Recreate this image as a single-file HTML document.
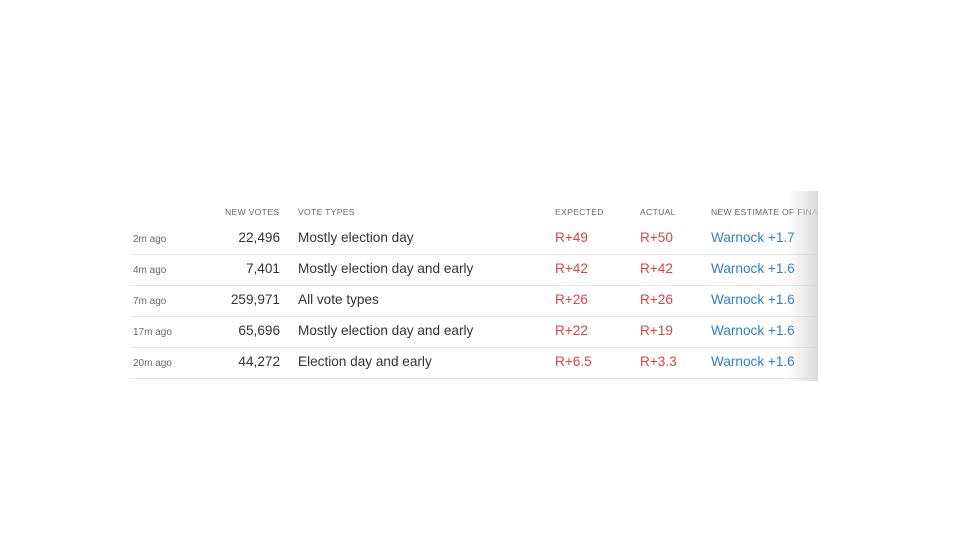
<!DOCTYPE html>
<html><head><meta charset="utf-8"><style>
html,body{margin:0;padding:0;background:#fff;width:960px;height:540px;overflow:hidden;font-family:"Liberation Sans",Arial,sans-serif;}
.wrap{position:absolute;left:130px;top:191px;width:688px;height:190px;overflow:hidden;}
.fade{position:absolute;right:0;top:0;width:30px;height:190px;background:linear-gradient(to right,rgba(255,255,255,0),rgba(215,215,215,0.9));}
.hd{position:absolute;top:16px;font-size:8.6px;color:#666;letter-spacing:0.3px;white-space:nowrap;}
.row{position:absolute;left:0;width:688px;height:31px;border-bottom:1px solid #e6e6e6;}
.row span{position:absolute;top:7px;font-size:13.6px;color:#333;white-space:nowrap;}
.row .t{left:3px;top:11px;font-size:10px;color:#666;}
.row .v{right:538px;}
.row .ty{left:168px;}
.row .e{left:425px;color:#d9434a;}
.row .a{left:510px;color:#d9434a;}
.row .w{left:581px;color:#2f80c2;}
</style></head><body>
<div class="wrap">
<div class="hd" style="left:95px">NEW VOTES</div>
<div class="hd" style="left:168px">VOTE TYPES</div>
<div class="hd" style="left:425px">EXPECTED</div>
<div class="hd" style="left:510px">ACTUAL</div>
<div class="hd" style="left:581px">NEW ESTIMATE OF FINAL</div>
<div class="row" style="top:32px"><span class="t">2m ago</span><span class="v">22,496</span><span class="ty">Mostly election day</span><span class="e">R+49</span><span class="a">R+50</span><span class="w">Warnock +1.7</span></div>
<div class="row" style="top:63px"><span class="t">4m ago</span><span class="v">7,401</span><span class="ty">Mostly election day and early</span><span class="e">R+42</span><span class="a">R+42</span><span class="w">Warnock +1.6</span></div>
<div class="row" style="top:94px"><span class="t">7m ago</span><span class="v">259,971</span><span class="ty">All vote types</span><span class="e">R+26</span><span class="a">R+26</span><span class="w">Warnock +1.6</span></div>
<div class="row" style="top:125px"><span class="t">17m ago</span><span class="v">65,696</span><span class="ty">Mostly election day and early</span><span class="e">R+22</span><span class="a">R+19</span><span class="w">Warnock +1.6</span></div>
<div class="row" style="top:156px"><span class="t">20m ago</span><span class="v">44,272</span><span class="ty">Election day and early</span><span class="e">R+6.5</span><span class="a">R+3.3</span><span class="w">Warnock +1.6</span></div>
<div class="fade"></div>
</div>
</body></html>
